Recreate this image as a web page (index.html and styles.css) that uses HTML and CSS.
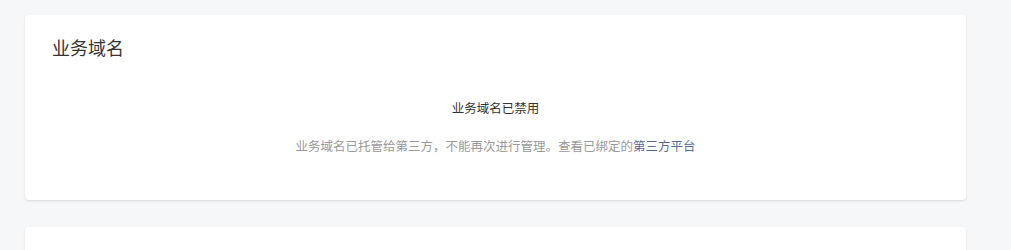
FILE: index.html
```html
<!DOCTYPE html>
<html lang="zh-CN">
<head>
<meta charset="utf-8">
<title>业务域名</title>
<link rel="stylesheet" href="styles.css">
</head>
<body>
<div class="page">
  <section class="card">
    <h2 class="card-title">业务域名</h2>
    <div class="empty">
      <p class="empty-title">业务域名已禁用</p>
      <p class="empty-desc">业务域名已托管给第三方，不能再次进行管理。查看已绑定的<a class="link" href="#">第三方平台</a></p>
    </div>
  </section>
  <section class="card card-next"></section>
</div>
</body>
</html>
```
FILE: styles.css
```css
html, body {
  margin: 0;
  padding: 0;
  background: #f6f7f9;
  font-family: "Noto Sans CJK SC", "Noto Sans", sans-serif;
  color: #353535;
}
.page {
  padding: 15px 45px 0 25px;
  display: flex;
  flex-direction: column;
  gap: 27px;
}
.card {
  background: #fff;
  border-radius: 4px;
  box-shadow: 0 1px 2px rgba(150, 150, 150, 0.3);
  padding: 20px 27px 44px;
}
.card-next {
  height: 60px;
  padding: 0;
}
.card-title {
  margin: 0;
  font-size: 18px;
  font-weight: 400;
  line-height: 25px;
  color: #353535;
}
.empty {
  margin-top: 38px;
  text-align: center;
}
.empty-title {
  margin: 0;
  font-size: 12.5px;
  line-height: 20px;
  color: #353535;
}
.empty-desc {
  margin: 18px 0 0;
  font-size: 12.5px;
  line-height: 20px;
  color: #9a9a9a;
}
.link {
  color: #576b95;
  text-decoration: none;
}
```
